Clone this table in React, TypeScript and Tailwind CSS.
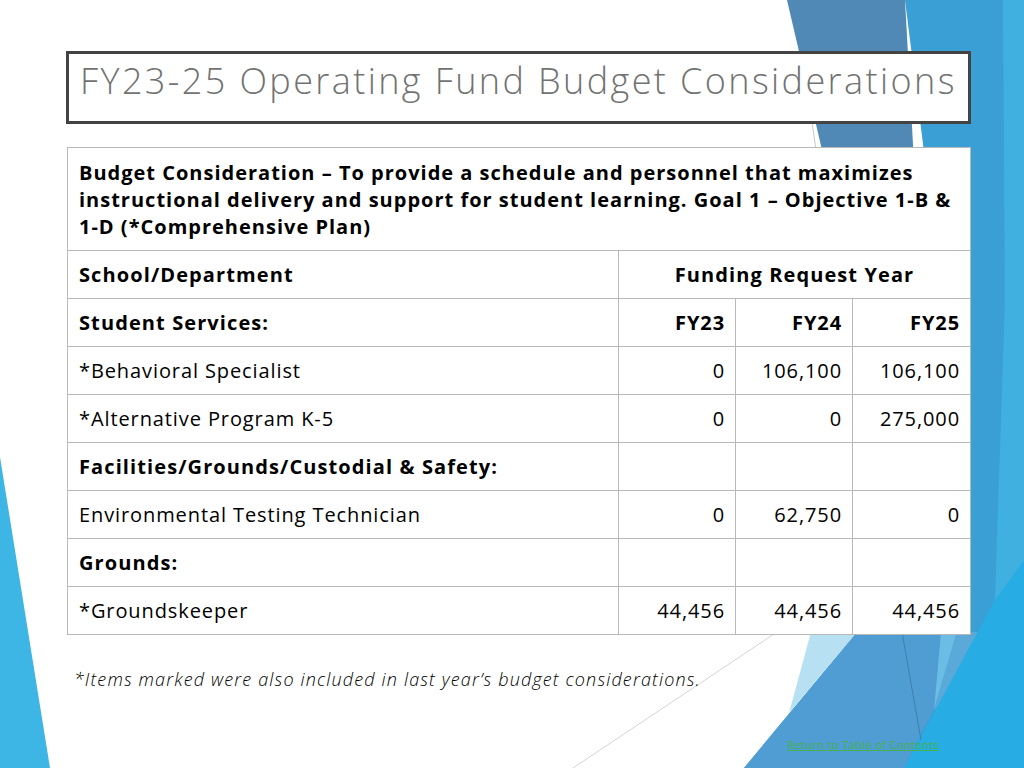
import React from "react";

const ROWS: { label: string; bold?: boolean; values: string[] }[] = [
	{ label: "*Behavioral Specialist", values: ["0", "106,100", "106,100"] },
	{ label: "*Alternative Program K-5", values: ["0", "0", "275,000"] },
	{ label: "Facilities/Grounds/Custodial & Safety:", bold: true, values: ["", "", ""] },
	{ label: "Environmental Testing Technician", values: ["0", "62,750", "0"] },
	{ label: "Grounds:", bold: true, values: ["", "", ""] },
	{ label: "*Groundskeeper", values: ["44,456", "44,456", "44,456"] },
];

function Backdrop() {
	return (
		<svg className="absolute inset-0" width="1024" height="768" viewBox="0 0 1024 768">
			<polygon points="905,0 1024,0 1024,768 744,768 857,632 930,200" fill="#3a9fd5" />
			<polygon points="1003,0 1024,0 1024,768 995,600 1005,300" fill="#40b0e1" />
			<polygon points="787,0 905,0 940,632 857,632 822,150" fill="#5089b6" />
			{/* lower pieces */}
			<polygon points="857,632 941,632 934,710 921,733 904,768 744,768" fill="#4f9dd3" />
			<polygon points="941,632 957,632 934,710" fill="#6cbde6" />
			<polygon points="957,632 992,632 945,700 934,710" fill="#5aa9d9" />
			<polygon points="995,600 1024,560 1024,768 904,768" fill="#27ade3" />
			<polygon points="811,632 857,632 789,713" fill="#b7e1f3" />
			<line x1="902" y1="632" x2="921" y2="740" stroke="#3c80b0" strokeWidth="1" />
			{/* thin gray strokes */}
			<line x1="803" y1="60" x2="816" y2="150" stroke="#c8c8c8" strokeWidth="1" />
			<line x1="777" y1="632" x2="573" y2="768" stroke="#d4d4d4" strokeWidth="1" />
			{/* left wedge */}
			<polygon points="0,457 50,768 0,768" fill="#3db5e5" />
		</svg>
	);
}

export default function App() {
	const cell = "border border-[#b8b8b8] px-[11px] h-[48px] text-[20px] text-black whitespace-nowrap";
	const num = "border border-[#b8b8b8] pr-[10px] pl-1 h-[48px] text-[20px] text-black text-right tracking-[0.9px]";
	return (
		<div className="relative w-[1024px] h-[768px] overflow-hidden bg-white font-['Open_Sans',sans-serif]">
			<Backdrop />
			<div className="relative flex flex-col">
				<div className="mt-[51px] ml-[66px] w-[905px] h-[73px] border-[3px] border-[#434343] bg-white flex items-start pl-[11px] pt-[5px]">
					<h1 className="text-[36px] font-light leading-[44px] tracking-[2.4px] text-[#727272] whitespace-nowrap">
						FY23-25 Operating Fund Budget Considerations
					</h1>
				</div>

				<table className="mt-[23px] ml-[67px] w-[903px] border-collapse bg-white table-fixed">
					<colgroup>
						<col className="w-[551px]" />
						<col className="w-[117px]" />
						<col className="w-[117px]" />
						<col className="w-[118px]" />
					</colgroup>
					<tbody>
						<tr>
							<td colSpan={4} className="border border-[#b8b8b8] px-[11px] h-[103px] text-[20px] font-bold leading-[27px] tracking-[1px] text-black align-middle whitespace-nowrap">
								Budget Consideration – To provide a schedule and personnel that maximizes
								<br />
								instructional delivery and support for student learning. Goal 1 – Objective 1-B &amp;
								<br />
								1-D (*Comprehensive Plan)
							</td>
						</tr>
						<tr>
							<td className={`${cell} font-bold tracking-[1.1px]`}>School/Department</td>
							<td colSpan={3} className={`${cell} font-bold tracking-[1.1px] text-center`}>
								Funding Request Year
							</td>
						</tr>
						<tr>
							<td className={`${cell} font-bold tracking-[1.1px]`}>Student Services:</td>
							<td className={`${num} font-bold`}>FY23</td>
							<td className={`${num} font-bold`}>FY24</td>
							<td className={`${num} font-bold`}>FY25</td>
						</tr>
						{ROWS.map((r) => (
							<tr key={r.label}>
								<td className={`${cell} ${r.bold ? "font-bold tracking-[1.1px]" : "font-normal tracking-[0.9px]"}`}>
									{r.label}
								</td>
								{r.values.map((v, i) => (
									<td key={i} className={num}>
										{v}
									</td>
								))}
							</tr>
						))}
					</tbody>
				</table>

				<p className="mt-[31px] ml-[74px] text-[18px] italic font-light tracking-[1.15px] text-black whitespace-nowrap">
					*Items marked were also included in last year’s budget considerations.
				</p>

				<a className="mt-[46px] ml-[787px] text-[11px] tracking-[0.4px] text-[#46b04a] underline leading-none whitespace-nowrap">
					Return to Table of Contents
				</a>
			</div>
		</div>
	);
}
